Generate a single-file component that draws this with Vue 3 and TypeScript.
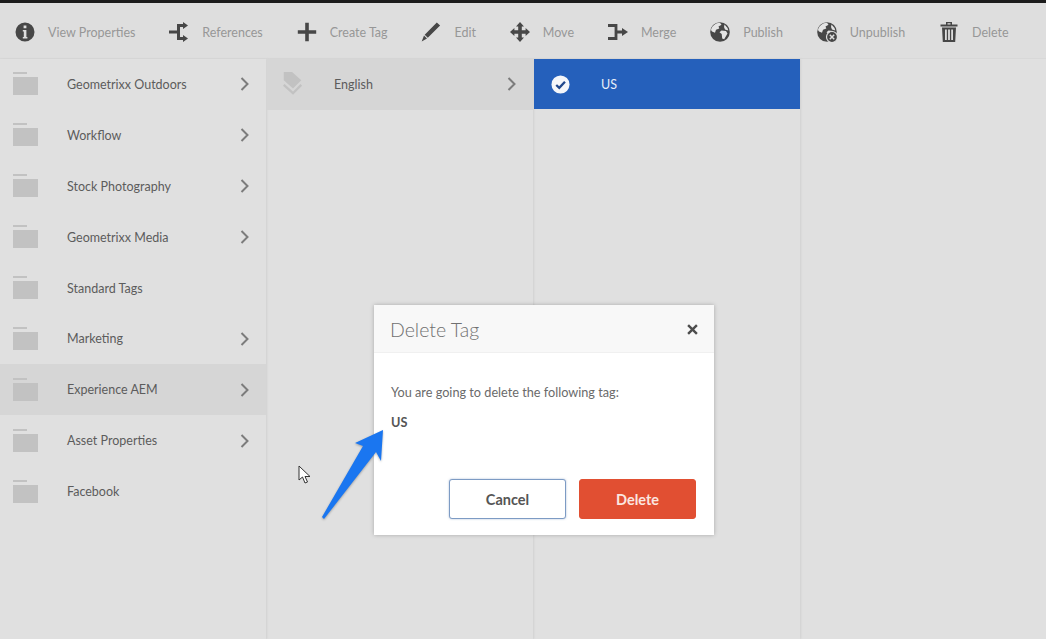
<script setup lang="ts">
type Tool = { label: string; icon: string }
type Row = { label: string; more: boolean; active?: boolean }

const tools: Tool[] = [
  { label: 'View Properties', icon: 'info' },
  { label: 'References', icon: 'refs' },
  { label: 'Create Tag', icon: 'plus' },
  { label: 'Edit', icon: 'edit' },
  { label: 'Move', icon: 'move' },
  { label: 'Merge', icon: 'merge' },
  { label: 'Publish', icon: 'globe' },
  { label: 'Unpublish', icon: 'unglobe' },
  { label: 'Delete', icon: 'trash' },
]

const rows: Row[] = [
  { label: 'Geometrixx Outdoors', more: true },
  { label: 'Workflow', more: true },
  { label: 'Stock Photography', more: true },
  { label: 'Geometrixx Media', more: true },
  { label: 'Standard Tags', more: false },
  { label: 'Marketing', more: true },
  { label: 'Experience AEM', more: true, active: true },
  { label: 'Asset Properties', more: true },
  { label: 'Facebook', more: false },
]
</script>

<template>
  <div class="page">
    <div class="topline"></div>
    <div class="toolbar">
      <div v-for="t in tools" :key="t.label" class="tool">
        <svg class="tool-icon" viewBox="0 0 20 20">
          <template v-if="t.icon === 'info'">
            <path fill="#474747" fill-rule="evenodd" d="M10 .5a9.500 9.500 0 1 0 0 19 9.500 9.500 0 0 0 0-19zM8.600 3.600h2.800v2.600H8.600zM7.800 8h3.600v7h1v1.500H7.800V15h1v-5.500h-1z" />
          </template>
          <template v-else-if="t.icon === 'refs'">
            <path fill="none" stroke="#474747" stroke-width="3" d="M0 10h8M15 3.500H9.500V16.500h5.500" />
            <path fill="#474747" d="M14 0l5 3.500-5 3.500zM14 13l5 3.500-5 3.500z" />
          </template>
          <template v-else-if="t.icon === 'plus'">
            <path fill="#474747" d="M8.200 .8h3.600v7.400h7.400v3.600h-7.400v7.400H8.200v-7.400H.8V8.200h7.400z" />
          </template>
          <template v-else-if="t.icon === 'edit'">
            <path fill="#474747" d="M15.800 .5l3.300 3L6.800 15.800 3.700 12.700zM3 13.600l3 3-5.300 2.800z" />
          </template>
          <template v-else-if="t.icon === 'move'">
            <path fill="#474747" d="M10 0l4 4.400h-2.200v3.800h3.800V6l4.400 4-4.400 4v-2.200h-3.800v3.800H14L10 20l-4-4.400h2.200v-3.800H4.400V14L0 10l4.400-4v2.200h3.800V4.400H6z" />
          </template>
          <template v-else-if="t.icon === 'merge'">
            <path fill="none" stroke="#474747" stroke-width="2.800" d="M0 3.500h8v13H0M8 10h7" />
            <path fill="#474747" d="M14 6l6 4-6 4z" />
          </template>
          <template v-else-if="t.icon === 'globe' || t.icon === 'unglobe'">
            <circle cx="10" cy="10" r="9.800" fill="#474747" />
            <path fill="#e4e4e4" d="M3.500 3.500C5.500 1.500 8 .8 10 .8l1.500 2-3 1.800.8 2-3.300 1.200-1 3-3-1.300-1-1.500c.2-1.600 1-3.200 2.500-4.500zM11.500 8.500l4.500.5 1.500 2.500-3.300 5.800-2-.8-.5-4.500-2.200-1.800zM14.500 2.500l3 3.500.8 2.500-3.300-1-1-2.500z" />
            <template v-if="t.icon === 'unglobe'">
              <circle cx="15" cy="15" r="5.500" fill="#474747" stroke="#dedede" stroke-width="1.200" />
              <path stroke="#dedede" stroke-width="1.500" d="M12.800 12.800l4.400 4.400M17.200 12.800l-4.400 4.400" />
            </template>
          </template>
          <template v-else>
            <path fill="#474747" fill-rule="evenodd" d="M7 0h6v2.500h5.500v2h-17v-2H7zM8.500 1.200v1.300h3V1.200zM3 5.500h14l-.8 14.500H3.800zM6 7.500v10.500h1.800V7.500zM9.100 7.500v10.500h1.800V7.500zM12.200 7.500v10.500H14V7.500z" />
          </template>
        </svg>
        <span>{{ t.label }}</span>
      </div>
    </div>

    <div class="columns">
      <div class="col">
        <div v-for="r in rows" :key="r.label" class="row" :class="{ active: r.active }">
          <svg class="row-icon" viewBox="0 0 26 24">
            <rect x="0" y="0" width="14" height="2" fill="#c2c2c2" />
            <rect x="0" y="5" width="25" height="18" fill="#c2c2c2" />
          </svg>
          <span class="row-label">{{ r.label }}</span>
          <svg v-if="r.more" class="chevron" viewBox="0 0 10 14">
            <path d="M1.500 1l6 6-6 6" fill="none" stroke="#7c7c7c" stroke-width="2" />
          </svg>
        </div>
      </div>

      <div class="col">
        <div class="row active">
          <svg class="row-icon" viewBox="0 0 26 26">
            <path fill="#c2c2c2" d="M3 0h9l10 9-9 9-10-9z" />
            <path fill="none" stroke="#c2c2c2" stroke-width="2.500" d="M3 14l10 9 9-9" />
          </svg>
          <span class="row-label">English</span>
          <svg class="chevron" viewBox="0 0 10 14">
            <path d="M1.500 1l6 6-6 6" fill="none" stroke="#7c7c7c" stroke-width="2" />
          </svg>
        </div>
      </div>

      <div class="col">
        <div class="row selected">
          <svg class="check" viewBox="0 0 20 20">
            <circle cx="10" cy="10" r="9.500" fill="#f4f6fa" />
            <path d="M5.500 10.500l3.200 3 6-6.500" fill="none" stroke="#20478c" stroke-width="2.400" />
          </svg>
          <span class="row-label">US</span>
        </div>
      </div>

      <div class="col last"></div>
    </div>

    <div class="dialog">
      <div class="dialog-head">
        <span class="dialog-title">Delete Tag</span>
        <svg class="close" viewBox="0 0 10 10">
          <path d="M1 1l8 8M9 1l-8 8" stroke="#4d4d4d" stroke-width="2.200" />
        </svg>
      </div>
      <div class="dialog-body">
        <p class="msg">You are going to delete the following tag:</p>
        <p class="tag">US</p>
      </div>
      <div class="dialog-foot">
        <button class="btn cancel">Cancel</button>
        <button class="btn danger">Delete</button>
      </div>
    </div>

    <svg class="arrow" viewBox="0 0 66 92">
      <path fill="#1a76f0" d="M63 2L61 33 56 24 4 91 2 89 43 18 35 15z" />
    </svg>
    <svg class="cursor" viewBox="0 0 13 20">
      <path d="M1 1v14l3.500-3 2.500 6 2.500-1-2.500-5.500H12z" fill="#fff" stroke="#333" stroke-width="1" />
    </svg>
  </div>
</template>

<style>
body {
  background: #e0e0e0;
}
</style>

<style scoped>
.page {
  position: relative;
  width: 1046px;
  height: 639px;
  overflow: hidden;
  background: #e0e0e0;
  font-family: Lato, "Open Sans", sans-serif;
  color: #555;
}
.topline {
  height: 3px;
  background: #1c1c1c;
}
.toolbar {
  display: flex;
  align-items: center;
  gap: 33.9px;
  height: 56px;
  box-sizing: border-box;
  padding: 3px 0 0 15px;
  background: #dedede;
  border-bottom: 1px solid #d8d8d8;
}
.tool {
  display: flex;
  align-items: center;
  gap: 13px;
  font-size: 12.5px;
  color: #979797;
}
.tool-icon {
  width: 20px;
  height: 20px;
  flex: none;
}
.columns {
  display: flex;
  height: 580px;
}
.col {
  width: 266px;
  margin-right: 1px;
  box-shadow: 1px 0 2px #d0d0d0;
  flex: none;
}
.col.last {
  flex: 1;
  box-shadow: none;
}
.row {
  display: flex;
  align-items: center;
  height: 50.9px;
  box-sizing: border-box;
  padding: 0 16px 0 13px;
  font-size: 12.5px;
  color: #5c5c5c;
}
.row.active {
  background: #d6d6d6;
}
.row.selected {
  background: #2560bb;
  color: #e8eef8;
  height: 50px;
  padding-left: 17px;
}
.row-icon {
  width: 26px;
  height: 24px;
  flex: none;
}
.row-label {
  margin-left: 28px;
  flex: 1;
}
.selected .row-label {
  margin-left: 31px;
}
.chevron {
  width: 10px;
  height: 14px;
  flex: none;
}
.check {
  width: 19px;
  height: 19px;
  flex: none;
}
.dialog {
  position: absolute;
  left: 374px;
  top: 305px;
  width: 340px;
  height: 230px;
  display: flex;
  flex-direction: column;
  background: #fff;
  box-shadow: 0 0 4px rgba(0, 0, 0, 0.25);
}
.dialog-head {
  display: flex;
  align-items: center;
  justify-content: space-between;
  height: 48px;
  flex: none;
  box-sizing: border-box;
  padding: 1px 16px 0;
  background: #f8f8f8;
  border-bottom: 1px solid #f0f0f0;
}
.dialog-title {
  font-size: 19.5px;
  font-weight: 300;
  color: #707070;
}
.close {
  width: 11px;
  height: 11px;
}
.dialog-body {
  flex: 1;
  padding: 0 17px;
  font-size: 12.7px;
  color: #6a6a6a;
}
.msg {
  margin: 31px 0 0;
}
.tag {
  margin: 14px 0 0;
  font-weight: 700;
  color: #555;
}
.dialog-foot {
  display: flex;
  justify-content: flex-end;
  gap: 13px;
  padding: 0 18px 16px;
}
.btn {
  width: 117px;
  height: 40px;
  border-radius: 3px;
  font-family: inherit;
  font-size: 14.5px;
  font-weight: 700;
}
.cancel {
  background: #fff;
  border: 1px solid #7d9bc4;
  box-shadow: 0 0 2px rgba(70, 110, 170, 0.5);
  color: #555;
}
.danger {
  background: #e14f32;
  border: 1px solid #e14f32;
  color: #fbe6e0;
}
.arrow {
  position: absolute;
  left: 320px;
  top: 428px;
  width: 66px;
  height: 92px;
  filter: drop-shadow(0 1px 1px rgba(0, 0, 0, 0.3));
}
.cursor {
  position: absolute;
  left: 298px;
  top: 465px;
  width: 13px;
  height: 20px;
}
</style>
